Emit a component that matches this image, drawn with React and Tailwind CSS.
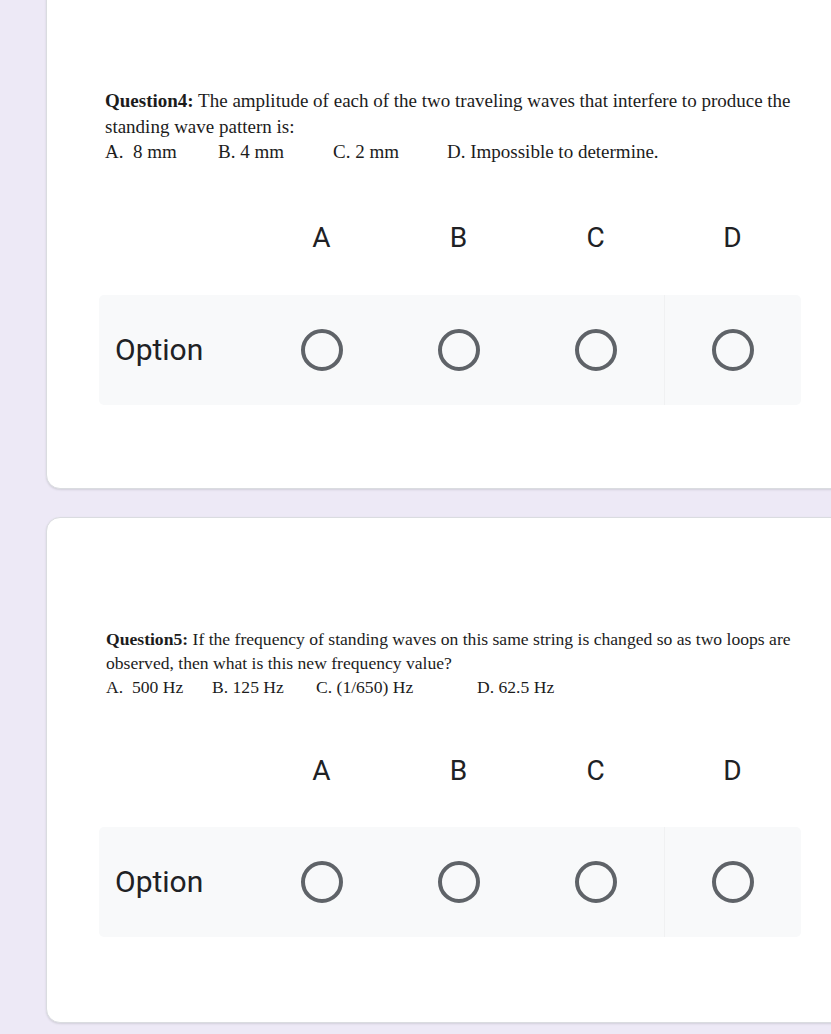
import React from "react";

const cols = ["A", "B", "C", "D"];

function Grid({ headerMt, boxMt }) {
  return (
    <div className="pl-[52px]" style={{ fontFamily: "Roboto, 'Noto Sans', sans-serif" }}>
      <div className="grid grid-cols-[154px_137px_137px_137px_137px] w-[702px]" style={{ marginTop: headerMt }}>
        <div />
        {cols.map((c) => (
          <div key={c} className="text-[28px] leading-[34px] text-[#202124] text-center">
            {c}
          </div>
        ))}
      </div>
      <div
        className="grid grid-cols-[154px_137px_137px_137px_137px] w-[702px] h-[110px] bg-[#f8f9fa] rounded-[5px] items-center"
        style={{ marginTop: boxMt }}
      >
        <div className="pl-[16px] text-[30px] leading-[34px] text-[#202124]">Option</div>
        {cols.map((c, i) => (
          <div
            key={c}
            className={
              "h-full flex items-center justify-center " +
              (i === 3 ? "border-l border-[#f0f1f2]" : "")
            }
          >
            <div className="w-[42px] h-[42px] rounded-full border-[4px] border-[#5f6368]" />
          </div>
        ))}
      </div>
    </div>
  );
}

export default function App() {
  return (
    <div className="min-h-[1034px] bg-[#ede9f6] overflow-hidden pl-[46px]">
      {/* Card 1 */}
      <div className="w-[830px] -mt-[20px] bg-white border border-[#dadce0] rounded-[14px] shadow-[0_1px_2px_rgba(60,64,67,0.15)] pt-[107px] pb-[83px]">
        <div
          className="pl-[58px] text-[19px] leading-[25.5px] text-[#1c1c1c]"
          style={{ fontFamily: "'Liberation Serif', 'Times New Roman', serif" }}
        >
          <div className="whitespace-nowrap">
            <span className="font-bold">Question4:</span> The amplitude of each of the two traveling waves that interfere to produce the
          </div>
          <div className="whitespace-nowrap">standing wave pattern is:</div>
          <div className="flex whitespace-nowrap">
            <span className="w-[113px]">A.&nbsp; 8 mm</span>
            <span className="w-[115px]">B. 4 mm</span>
            <span className="w-[114px]">C. 2 mm</span>
            <span>D. Impossible to determine.</span>
          </div>
        </div>
        <Grid headerMt={56} boxMt={40} />
      </div>

      {/* Card 2 */}
      <div className="w-[830px] mt-[28px] bg-white border border-[#dadce0] rounded-[14px] shadow-[0_1px_2px_rgba(60,64,67,0.15)] pt-[109px] pb-[85px]">
        <div
          className="pl-[59px] text-[17.6px] leading-[24px] text-[#1c1c1c]"
          style={{ fontFamily: "'Liberation Serif', 'Times New Roman', serif" }}
        >
          <div className="whitespace-nowrap">
            <span className="font-bold">Question5:</span> If the frequency of standing waves on this same string is changed so as two loops are
          </div>
          <div className="whitespace-nowrap">observed, then what is this new frequency value?</div>
          <div className="flex whitespace-nowrap">
            <span className="w-[106px]">A.&nbsp; 500 Hz</span>
            <span className="w-[104px]">B. 125 Hz</span>
            <span className="w-[161px]">C. (1/650) Hz</span>
            <span>D. 62.5 Hz</span>
          </div>
        </div>
        <Grid headerMt={55} boxMt={39} />
      </div>
    </div>
  );
}
